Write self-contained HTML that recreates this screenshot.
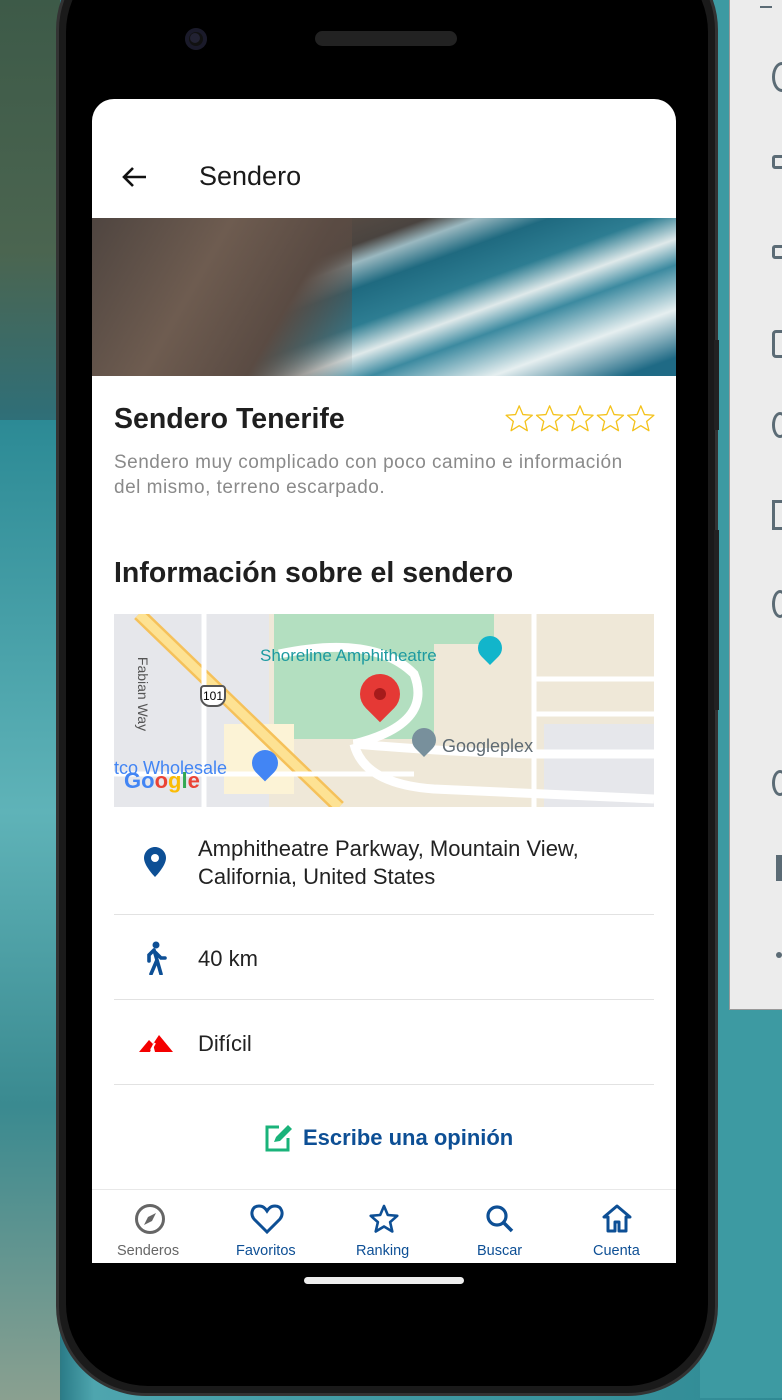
<!DOCTYPE html>
<html><head><meta charset="utf-8"><style>
*{margin:0;padding:0;box-sizing:border-box}
body{width:782px;height:1398px;overflow:hidden;position:relative;font-family:"Liberation Sans",Roboto,sans-serif;
background:linear-gradient(90deg,#2f4a3a 0%,#3a5a48 5%,#2d7e8a 8%,#4ea5ae 12%,#2f8a94 100%)}
.abs{position:absolute}
</style></head><body>
<div class="abs" style="left:0;top:0;width:60px;height:420px;background:linear-gradient(180deg,#3d5a48,#4b6550 60%,#2f6f78)"></div>
<div class="abs" style="left:0;top:420px;width:60px;height:980px;background:linear-gradient(180deg,#2c8a95,#5fb3b8 40%,#3a8a90 70%,#8aa090 100%)"></div>
<div class="abs" style="left:700px;top:0;width:82px;height:1398px;background:#3d9aa2"></div>
<div class="abs" style="left:729px;top:0;width:53px;height:1010px;background:#ececec;border-left:1px solid #999;border-bottom:1px solid #999"></div>
<div class="abs" style="left:760px;top:6px;width:12px;height:2px;background:#5b6b75"></div>
<div class="abs" style="left:772px;top:62px;width:20px;height:30px;border:3px solid #5b6b75;border-radius:50%"></div>
<div class="abs" style="left:772px;top:155px;width:14px;height:14px;border:3px solid #5b6b75;border-radius:3px"></div>
<div class="abs" style="left:772px;top:245px;width:14px;height:14px;border:3px solid #5b6b75;border-radius:3px"></div>
<div class="abs" style="left:772px;top:330px;width:16px;height:28px;border:3px solid #5b6b75;border-radius:4px"></div>
<div class="abs" style="left:772px;top:412px;width:16px;height:26px;border:3px solid #5b6b75;border-radius:50%"></div>
<div class="abs" style="left:772px;top:500px;width:16px;height:30px;border:3px solid #5b6b75"></div>
<div class="abs" style="left:772px;top:590px;width:16px;height:28px;border:3px solid #5b6b75;border-radius:50%"></div>
<div class="abs" style="left:772px;top:770px;width:16px;height:26px;border:3px solid #5b6b75;border-radius:50%"></div>
<div class="abs" style="left:776px;top:855px;width:8px;height:26px;background:#5b6b75"></div>
<div class="abs" style="left:776px;top:952px;width:6px;height:6px;border-radius:50%;background:#5b6b75"></div>

<div class="abs" style="left:56px;top:-60px;width:662px;height:1456px;border-radius:90px;background:#1a1a1a;border:3px solid #333"></div>
<div class="abs" style="left:66px;top:-50px;width:642px;height:1436px;border-radius:82px;background:#000"></div>
<div class="abs" style="left:714px;top:340px;width:5px;height:90px;background:#222"></div>
<div class="abs" style="left:714px;top:530px;width:5px;height:180px;background:#222"></div>
<div class="abs" style="left:185px;top:28px;width:22px;height:22px;border-radius:50%;background:#111;box-shadow:inset 0 0 0 4px #1a1a2a"></div>
<div class="abs" style="left:190px;top:33px;width:10px;height:10px;border-radius:50%;background:#223"></div>
<div class="abs" style="left:315px;top:31px;width:142px;height:15px;border-radius:8px;background:#222"></div>
<div class="abs" style="left:304px;top:1277px;width:160px;height:7px;border-radius:4px;background:#eee"></div>

<div class="abs" style="left:92px;top:99px;width:584px;height:1164px;background:#fff;border-radius:22px 22px 0 0;overflow:hidden">
  <svg class="abs" style="left:28px;top:66px" width="28" height="24" viewBox="0 0 28 24"><path d="M26 12H4M13 3L4 12l9 9" fill="none" stroke="#111" stroke-width="2.6"/></svg>
  <div class="abs" style="left:107px;top:62px;font-size:27px;color:#1a1a1a">Sendero</div>
  <div class="abs" style="left:0;top:119px;width:584px;height:158px;background:linear-gradient(160deg,#6a5a4e 0%,#5d4f45 20%,#4a4440 33%,#9ab8c0 38%,#1f6a80 45%,#2d7d92 55%,#dfe9ea 63%,#3c8aa0 70%,#e6eff0 82%,#1f6a85 95%)"></div>
  <div class="abs" style="left:0;top:119px;width:260px;height:158px;background:linear-gradient(120deg,#4f4540 0%,#6e5c50 40%,#5a4b43 70%,rgba(90,75,67,0) 100%)"></div>
  <div class="abs" style="left:22px;top:304px;font-size:28.5px;font-weight:bold;color:#1f1f1f">Sendero Tenerife</div>
  <svg class="abs" style="left:412px;top:304px" width="152" height="32" viewBox="0 0 150 30">
    <g fill="none" stroke="#f4c21b" stroke-width="1.3" stroke-linejoin="round">
      <path id="s" d="M15 2l3.6 8.6 9.3.7-7.1 6.1 2.2 9.1L15 21.6 7 26.5l2.2-9.1-7.1-6.1 9.3-.7z"/>
      <use href="#s" x="30"/><use href="#s" x="60"/><use href="#s" x="90"/><use href="#s" x="120"/>
    </g></svg>
  <div class="abs" style="left:22px;top:351px;width:540px;font-size:19px;letter-spacing:.5px;line-height:25px;color:#8a8a8a">Sendero muy complicado con poco camino e información del mismo, terreno escarpado.</div>
  <div class="abs" style="left:22px;top:458px;font-size:28.5px;font-weight:bold;color:#1f1f1f">Información sobre el sendero</div>
  <div class="abs" style="left:22px;top:515px;width:540px;height:193px;background:#efe8d8;overflow:hidden">
    <div class="abs" style="left:0;top:0;width:155px;height:193px;background:#e6e7eb"></div>
    <div class="abs" style="left:160px;top:0;width:160px;height:125px;background:#b3dfc0"></div>
    <div class="abs" style="left:220px;top:0;width:160px;height:30px;background:#b3dfc0"></div>
    <div class="abs" style="left:430px;top:110px;width:110px;height:83px;background:#e6e7eb"></div>
    <div class="abs" style="left:110px;top:110px;width:70px;height:70px;background:#fcf3d6"></div>
    <svg class="abs" style="left:0;top:0" width="540" height="193">
      <path d="M25 0L225 193" stroke="#f5c15a" stroke-width="14"/><path d="M25 0L225 193" stroke="#fde293" stroke-width="9"/>
      <path d="M165 40Q260 20 300 60Q320 110 240 130Q360 140 430 140L540 140" stroke="#fff" stroke-width="9" fill="none"/>
      <path d="M240 130Q250 170 320 175L540 185" stroke="#fff" stroke-width="9" fill="none"/>
      <path d="M420 0V193M420 100H540M420 65H540" stroke="#fff" stroke-width="5" fill="none"/>
      <path d="M0 160H300" stroke="#fff" stroke-width="5"/>
      <path d="M90 0V193" stroke="#fff" stroke-width="5"/>
    </svg>
    <div class="abs" style="left:146px;top:32px;font-size:17px;color:#1d9aa0">Shoreline Amphitheatre</div>
    <div class="abs" style="left:364px;top:22px;width:24px;height:24px;border-radius:50% 50% 50% 0;transform:rotate(-45deg);background:#12b5cb"></div>
    <div class="abs" style="left:246px;top:60px;width:40px;height:40px;border-radius:50% 50% 50% 0;transform:rotate(-45deg);background:#e53935"></div>
    <div class="abs" style="left:260px;top:74px;width:12px;height:12px;border-radius:50%;background:#a61b1b"></div>
    <div class="abs" style="left:298px;top:114px;width:24px;height:24px;border-radius:50% 50% 50% 0;transform:rotate(-45deg);background:#78909c"></div>
    <div class="abs" style="left:328px;top:122px;font-size:18px;color:#5f6b73">Googleplex</div>
    <div class="abs" style="left:0;top:144px;font-size:18px;color:#4285f4">tco Wholesale</div>
    <div class="abs" style="left:138px;top:136px;width:26px;height:26px;border-radius:50% 50% 50% 0;transform:rotate(-45deg);background:#4285f4"></div>
    <div class="abs" style="left:10px;top:154px;font-size:22px;font-weight:bold;color:#4285f4">Go<span style="color:#ea4335">o</span><span style="color:#fbbc05">g</span><span style="color:#34a853">l</span><span style="color:#ea4335">e</span></div>
    <div class="abs" style="left:-8px;top:72px;font-size:14px;color:#555;transform:rotate(90deg)">Fabian Way</div>
    <div class="abs" style="left:86px;top:71px;width:26px;height:22px;border:2px solid #555;border-radius:4px 4px 10px 10px;background:#fff;font-size:12px;text-align:center;line-height:18px">101</div>
  </div>
  <svg class="abs" style="left:52px;top:748px" width="22" height="30" viewBox="0 0 22 30"><path d="M11 0C5 0 0 5 0 11c0 8 11 19 11 19s11-11 11-19C22 5 17 0 11 0z" fill="#0d4f95"/><circle cx="11" cy="11" r="4" fill="#fff"/></svg>
  <div class="abs" style="left:106px;top:736px;font-size:22px;line-height:28px;color:#222">Amphitheatre Parkway, Mountain View,<br>California, United States</div>
  <div class="abs" style="left:22px;top:815px;width:540px;height:1px;background:#e2e2e2"></div>
  <svg class="abs" style="left:50px;top:842px" width="28" height="34" viewBox="0 0 28 34"><circle cx="14" cy="4" r="3.5" fill="#0d4f95"/><path d="M12 9l-5 5v6M12 9l3 10-6 14M15 19l4 14M13 11l6 6h4" stroke="#0d4f95" stroke-width="3.6" fill="none" stroke-linecap="round"/></svg>
  <div class="abs" style="left:106px;top:847px;font-size:22px;color:#222">40 km</div>
  <div class="abs" style="left:22px;top:900px;width:540px;height:1px;background:#e2e2e2"></div>
  <svg class="abs" style="left:47px;top:935px" width="34" height="20" viewBox="0 0 34 20"><path d="M0 18L10 6l4 4 6-9 14 17zM14 10l-3 8h5z" fill="#f40000"/><path d="M16 9l-4 7" stroke="#fff" stroke-width="2"/></svg>
  <div class="abs" style="left:106px;top:932px;font-size:22px;color:#222">Difícil</div>
  <div class="abs" style="left:22px;top:985px;width:540px;height:1px;background:#e2e2e2"></div>
  <svg class="abs" style="left:172px;top:1025px" width="30" height="28" viewBox="0 0 30 28"><path d="M15 3H3v23h21V14" fill="none" stroke="#1ab37a" stroke-width="3"/><path d="M10 18l2-5L24 1l4 4-12 12z" fill="#1ab37a"/></svg>
  <div class="abs" style="left:211px;top:1026px;font-size:22px;font-weight:bold;color:#0d4f95">Escribe una opinión</div>
  <div class="abs" style="left:0;top:1090px;width:584px;height:1px;background:#e8e8e8"></div>
  <svg class="abs" style="left:42px;top:1104px" width="32" height="32" viewBox="0 0 32 32"><circle cx="16" cy="16" r="13.5" fill="none" stroke="#666" stroke-width="3"/><path d="M22 10l-4 8-8 4 4-8z" fill="#666"/></svg>
  <div class="abs" style="left:25px;top:1144px;font-size:14.5px;color:#666">Senderos</div>
  <svg class="abs" style="left:158px;top:1104px" width="34" height="32" viewBox="0 0 34 32"><path d="M17 29L4 16C0 11 2 3 9 3c4 0 6 2 8 5 2-3 4-5 8-5 7 0 9 8 5 13z" fill="none" stroke="#0d4f95" stroke-width="3"/></svg>
  <div class="abs" style="left:144px;top:1144px;font-size:14.5px;color:#0d4f95">Favoritos</div>
  <svg class="abs" style="left:276px;top:1104px" width="32" height="32" viewBox="0 0 32 32"><path d="M16 3l3.8 9 9.5.8-7.2 6.3 2.2 9.4L16 23.5 7.7 28.5l2.2-9.4-7.2-6.3 9.5-.8z" fill="none" stroke="#0d4f95" stroke-width="2.6" stroke-linejoin="round"/></svg>
  <div class="abs" style="left:264px;top:1144px;font-size:14.5px;color:#0d4f95">Ranking</div>
  <svg class="abs" style="left:392px;top:1104px" width="32" height="32" viewBox="0 0 32 32"><circle cx="13" cy="13" r="9" fill="none" stroke="#0d4f95" stroke-width="3.2"/><path d="M19.5 19.5L28 28" stroke="#0d4f95" stroke-width="3.6"/></svg>
  <div class="abs" style="left:385px;top:1144px;font-size:14.5px;color:#0d4f95">Buscar</div>
  <svg class="abs" style="left:509px;top:1104px" width="32" height="32" viewBox="0 0 32 32"><path d="M16 3L3 14h4v14h7v-9h4v9h7V14h4z" fill="none" stroke="#0d4f95" stroke-width="3" stroke-linejoin="round"/></svg>
  <div class="abs" style="left:501px;top:1144px;font-size:14.5px;color:#0d4f95">Cuenta</div>
</div>
</body></html>
